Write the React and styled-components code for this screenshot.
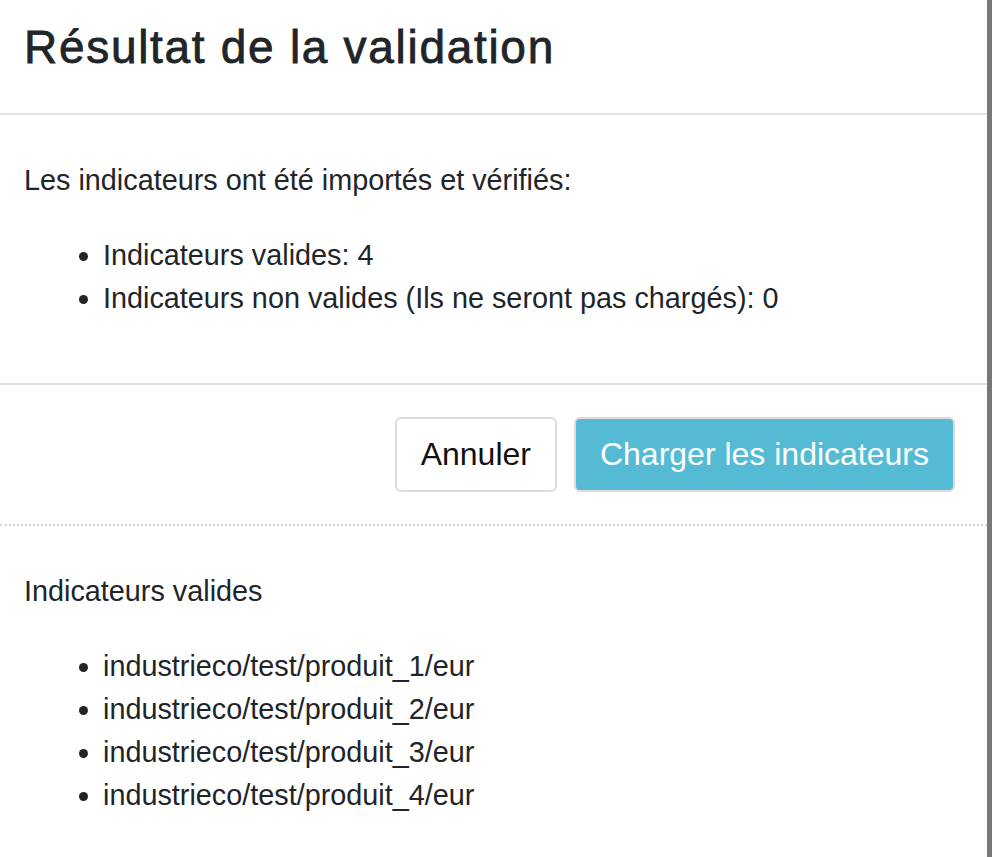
import React from "react";
import styled, { createGlobalStyle } from "styled-components";

const GlobalStyle = createGlobalStyle`
  html, body {
    margin: 0;
    padding: 0;
  }
  body {
    background: #787878;
    font-family: "Liberation Sans", Arial, Helvetica, sans-serif;
    color: #212529;
  }
  * { box-sizing: border-box; }
`;

const Modal = styled.div`
  width: 987px;
  min-height: 100vh;
  background: #ffffff;
`;

const Header = styled.header`
  padding: 21px 24px 40px;
  border-bottom: 2px solid #dfe3e6;
`;

const Title = styled.h1`
  margin: 0;
  font-size: 46px;
  line-height: 52px;
  font-weight: 400;
  letter-spacing: 1.7px;
  -webkit-text-stroke: 0.8px #212529;
  color: #212529;
`;

const Section = styled.section`
  padding: 44px 24px 31px;
  font-size: 28.8px;
  line-height: 43px;
  border-bottom: ${(p) => (p.$divider ? "2px solid #dfe3e6" : "none")};
`;

const Text = styled.p`
  margin: 0 0 32px;
`;

const List = styled.ul`
  margin: 0 0 32px;
  padding-left: 79px;
  list-style: disc;
`;

const Footer = styled.footer`
  display: flex;
  justify-content: flex-end;
  gap: 17px;
  padding: 32px 32px 32px 24px;
  border-bottom: 2px dotted #d6d6d6;
`;

const Button = styled.button`
  height: 75px;
  padding: 0 24px;
  border: 2px solid #dcdcdc;
  border-radius: 6px;
  font-family: "Liberation Sans", Arial, Helvetica, sans-serif;
  font-size: 32px;
  background: ${(p) => (p.$primary ? "#55bbd5" : "#ffffff")};
  color: ${(p) => (p.$primary ? "#ffffff" : "#111111")};
  cursor: pointer;
`;

const valid = [
  "industrieco/test/produit_1/eur",
  "industrieco/test/produit_2/eur",
  "industrieco/test/produit_3/eur",
  "industrieco/test/produit_4/eur",
];

export default function App() {
  return (
    <>
      <GlobalStyle />
      <Modal>
        <Header>
          <Title>Résultat de la validation</Title>
        </Header>
        <Section $divider>
          <Text>Les indicateurs ont été importés et vérifiés:</Text>
          <List>
            <li>Indicateurs valides: 4</li>
            <li>Indicateurs non valides (Ils ne seront pas chargés): 0</li>
          </List>
        </Section>
        <Footer>
          <Button>Annuler</Button>
          <Button $primary>Charger les indicateurs</Button>
        </Footer>
        <Section>
          <Text>Indicateurs valides</Text>
          <List>
            {valid.map((v) => (
              <li key={v}>{v}</li>
            ))}
          </List>
        </Section>
      </Modal>
    </>
  );
}
